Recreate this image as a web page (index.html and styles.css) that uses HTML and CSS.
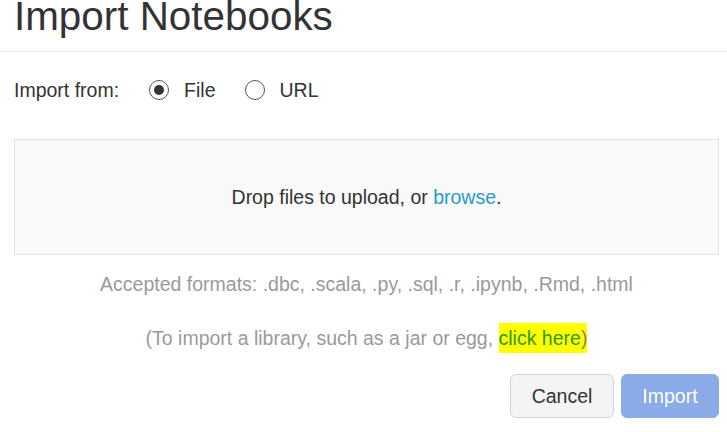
FILE: index.html
```html
<!DOCTYPE html>
<html>
<head>
<meta charset="utf-8">
<link rel="stylesheet" href="styles.css">
</head>
<body>
<div class="modal">
  <div class="modal-header">
    <h1 class="title">Import Notebooks</h1>
  </div>
  <div class="modal-body">
    <div class="source-row">
      <span class="source-label">Import from:</span>
      <label class="radio"><span class="radio-circle checked"></span><span class="radio-text">File</span></label>
      <label class="radio"><span class="radio-circle"></span><span class="radio-text">URL</span></label>
    </div>
    <div class="dropzone">Drop files to upload, or <a class="link">browse</a>.</div>
    <p class="formats">Accepted formats: .dbc, .scala, .py, .sql, .r, .ipynb, .Rmd, .html</p>
    <p class="library">(To import a library, such as a jar or egg, <span class="hl"><a class="green-link">click here</a>)</span></p>
  </div>
  <div class="modal-footer">
    <button class="btn btn-cancel">Cancel</button>
    <button class="btn btn-import">Import</button>
  </div>
</div>
</body>
</html>
```
FILE: styles.css
```css
html, body {
  margin: 0;
  padding: 0;
  background: #fff;
}
body {
  font-family: "Liberation Sans", Arial, sans-serif;
  font-size: 19.5px;
  color: #333;
  overflow: hidden;
}
.modal {
  width: 727px;
}
.modal-header {
  margin-top: -6px;
  padding: 0 14px 13px;
  border-bottom: 1px solid #e8e8e8;
}
.title {
  margin: 0;
  font-size: 40.4px;
  font-weight: normal;
  line-height: 44px;
  color: #333;
}
.modal-body {
  padding: 23px 8px 0 14px;
}
.source-row {
  display: flex;
  align-items: center;
  height: 30px;
  line-height: 30px;
}
.source-label {
  margin-right: 30px;
}
.radio {
  display: flex;
  align-items: center;
  margin-right: 29px;
}
.radio-circle {
  box-sizing: border-box;
  width: 20px;
  height: 20px;
  border: 1.5px solid #555;
  border-radius: 50%;
  display: flex;
  align-items: center;
  justify-content: center;
  margin-right: 15px;
}
.radio-circle.checked::after {
  content: "";
  width: 10px;
  height: 10px;
  border-radius: 50%;
  background: #333;
}
.dropzone {
  margin-top: 34px;
  background: #f9f9f9;
  border: 1px solid #e3e3e3;
  padding: 42px 0;
  line-height: 30px;
  text-align: center;
}
.link {
  color: #2b9ac9;
}
.formats, .library {
  margin: 14px 0 0;
  line-height: 30px;
  text-align: center;
  color: #9a9a9a;
}
.library {
  margin-top: 24px;
}
.hl {
  background: #ffff00;
  color: #8c8c3a;
  padding: 4px 0;
}
.green-link {
  color: #2e9a0a;
}
.modal-footer {
  display: flex;
  justify-content: flex-end;
  gap: 7px;
  padding: 21px 8px 0 14px;
}
.btn {
  box-sizing: border-box;
  height: 44px;
  font-family: "Liberation Sans", Arial, sans-serif;
  font-size: 19.5px;
  border-radius: 6px;
  border: 1px solid #d4d4d4;
}
.btn-cancel {
  width: 104px;
  background: #f4f4f4;
  color: #333;
}
.btn-import {
  width: 98px;
  background: #8aaae8;
  border-color: #8aaae8;
  color: #ffffff;
}
```
